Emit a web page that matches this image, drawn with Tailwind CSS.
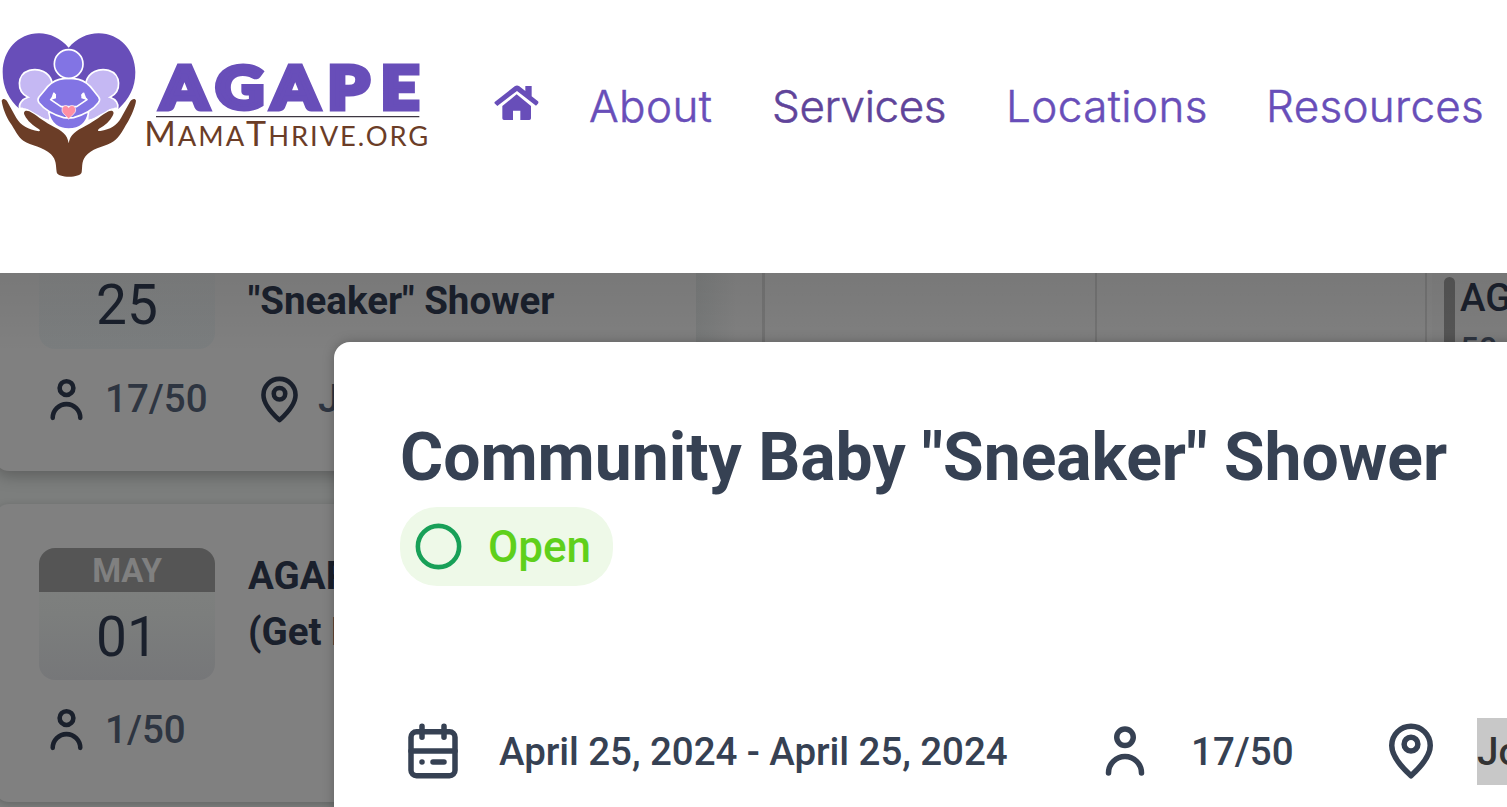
<!DOCTYPE html>
<html lang="en">
<head>
<meta charset="utf-8">
<title>AGAPE MamaThrive.org</title>
<script src="https://cdn.jsdelivr.net/npm/@tailwindcss/browser@4"></script>
</head>
<body class="bg-white">
<svg class="hidden">
  <symbol id="person" viewBox="0 0 24 24" fill="none" stroke="currentColor" stroke-width="2" stroke-linecap="round"><circle cx="12" cy="7" r="3"/><path d="M6 20a6 6 0 0 1 12 0"/></symbol>
  <symbol id="pin" viewBox="0 0 24 24" fill="none" stroke="currentColor" stroke-width="2" stroke-linejoin="round"><path d="M12 21C10.500 19.600 5 14.800 5 10a7 7 0 0 1 14 0c0 4.800-5.500 9.600-7 11Z"/><circle cx="12" cy="9.500" r="2.500"/></symbol>
  <symbol id="calendar" viewBox="0 0 24 24" fill="none" stroke="currentColor" stroke-width="2" stroke-linecap="round"><rect x="4" y="5" width="16" height="16" rx="2"/><path d="M8 3v4M16 3v4M4 12h16M8 16h0M12 16h4"/></symbol>
</svg>
<div class="relative flex h-[807px] w-[1507px] flex-col overflow-hidden font-['Roboto',sans-serif]">
  <header class="flex h-[273px] shrink-0 items-start bg-white">
    <svg class="mt-5 h-[170px] w-[430px] shrink-0" viewBox="0 0 1290 510">
      <path fill="#684eb9" d="M206 83C182 55 150 40 117 40C54 40 8 92 8 156C8 203 27 240 60 268L354 268C388 236 406 203 406 156C406 92 359 40 296 40C262 40 230 55 206 83Z"/>
      <g fill="#c5b8f3" stroke="#fff" stroke-width="5">
        <path d="M84 232C48 215 50 162 88 151C119 143 147 158 155 183L165 235L148 300C135 302 119 292 100 281C88 270 73 262 59 266C55 252 66 238 84 232Z"/>
        <path d="M330 232C366 215 364 162 326 151C295 143 267 158 259 183L249 235L266 300C280 302 295 292 314 281C325 269 340 262 353 266C357 252 348 238 330 232Z"/>
      </g>
      <path fill="#fff" d="M60 266C79 261 104 279 150 305C177 319 191 326 206 329C225 326 240 317 263 304C309 280 333 261 353 267L365 278L345 334L240 375H170L70 334L49 280Z"/>
      <g fill="#8274e4" stroke="#fff" stroke-width="5" stroke-linejoin="round">
        <path d="M146 277C151 312 177 327 206 327C236 327 260 312 266 277Z"/>
        <path d="M178 178Q206 172 236 178C257 183 271 198 280 211L296 231Q302 239 295 248C277 272 244 286 221 293Q206 294 191 293C168 286 136 272 117 248Q111 239 117 231L134 211C143 198 157 183 178 178Z"/>
        <circle cx="206" cy="132" r="43"/>
      </g>
      <path fill="#c5b8f3" d="M68 264C70 248 82 236 100 232C112 254 128 270 144 278L147 299C118 288 95 266 68 264ZM344 264C342 248 330 236 312 232C300 254 284 270 268 278L265 299C294 288 317 266 344 264Z"/>
      <path fill="none" stroke="#fff" stroke-width="5" stroke-linejoin="round" d="M161 219L166 225L152 239L183 260H230L261 239L246 225L251 219"/>
      <path fill="#fff" d="M160 217L168 225V235L152 240ZM252 217L244 225V235L261 240Z"/>
      <path fill="#ff8fa4" stroke="#fff" stroke-width="2" d="M206 298C201 288 186 282 186 270C186 255 202 253 206 263C211 253 227 255 227 270C227 282 211 288 206 298Z"/>
      <path fill="#6b3d27" d="M5 242C8 234 17 236 22 245L49 294C62 316 85 329 116 334C121 333 121 330 116 327C97 315 83 304 74 286C68 274 77 269 88 274C109 285 127 302 153 316C188 334 202 344 206 370C211 344 226 334 260 316C287 302 305 285 326 274C337 269 345 276 338 287C330 303 316 315 297 326C292 330 293 334 301 333C331 328 350 317 363 294L390 245C396 236 406 234 408 242C406 260 394 288 382 308C369 329 360 350 341 364C319 379 285 382 263 402C243 420 248 438 245 457C242 475 171 475 170 456C167 437 170 420 153 403C130 380 93 377 70 362C52 349 44 327 31 309C18 289 8 263 5 242Z"/>
      <text transform="scale(1.12 1)" font-family="Lato" font-weight="900" font-size="179" fill="#684eb9" stroke="#684eb9" stroke-width="15" y="268" x="431 577 728 877 1020">AGAPE</text>
      <path stroke="#3d3742" stroke-width="4" d="M468 290H1258"/>
      <text font-family="Lato" fill="#6b3d27" y="378" textLength="852" lengthAdjust="spacing" x="433"><tspan font-size="102">M</tspan><tspan font-size="82">AMA</tspan><tspan font-size="102">T</tspan><tspan font-size="82">HRIVE.ORG</tspan></text>
    </svg>
    <nav class="mt-[73px] flex h-[66px] items-center font-['Inter',sans-serif] text-[44px] font-light whitespace-nowrap text-[#684eb9] [-webkit-text-stroke:0.5px]">
      <svg class="mb-[7px] ml-[64px] h-[36px] w-[46px]" viewBox="0 0 138 108" fill="currentColor"><path d="M2 51L62 4Q69 -1 76 4L94 18V3H113V34L132 49Q135 53 131 57L126 62L69 18L10 63L3 56Q0 54 2 51Z"/><path d="M68 28L111 63V100Q111 105 106 105H79V77H57V105H30Q25 105 25 100V63Z"/></svg>
      <a class="ml-[49px] w-[183px] tracking-[0.4px]">About</a>
      <a class="w-[234px] tracking-[-0.4px] text-[#60449a]">Services</a>
      <a class="w-[260px] tracking-[0.4px]">Locations</a>
      <a class="tracking-[0.3px]">Resources</a>
    </nav>
  </header>
  <main class="relative flex h-[534px] overflow-hidden bg-[#808080] text-[#1a202c]">
    <section class="-mt-[100px] -ml-[5px] flex w-[701px] shrink-0 flex-col gap-[33px] bg-[#7c7e7d]">
      <article class="h-[298px] shrink-0 rounded-[14px] bg-[#808080] p-11 shadow-[0_5px_16px_rgba(0,0,0,0.25)]">
        <div class="flex gap-[33px]">
          <div class="h-[132px] w-[176px] overflow-hidden rounded-2xl bg-linear-to-b from-[#808080] to-[#7a7d7e] text-center">
            <div class="h-11 bg-[#555]"></div>
            <div class="text-[55px] leading-[88px]">25</div>
          </div>
          <h2 class="pt-[56px] text-[38.5px] leading-[56px] font-bold whitespace-nowrap">"Sneaker" Shower</h2>
        </div>
        <div class="mt-[23px] flex h-[55px] items-center text-[38.5px] font-medium text-[#2e3541]">
          <svg class="mr-[11px] size-[55px] text-[#1a202c]"><use href="#person"/></svg><span class="w-[147px] pb-[2px]">17/50</span>
          <svg class="mr-[11px] size-[55px] text-[#1a202c]"><use href="#pin"/></svg><span class="pb-[2px]">Jordan</span>
        </div>
      </article>
      <article class="h-[298px] shrink-0 rounded-[14px] bg-[#808080] p-11 shadow-[0_2px_8px_rgba(0,0,0,0.2)]">
        <div class="flex gap-[33px]">
          <div class="h-[132px] w-[176px] overflow-hidden rounded-2xl bg-linear-to-b from-[#808280] via-[#7c7e7d] to-[#767779] text-center">
            <div class="h-11 bg-[#555] text-[33px] leading-[46px] font-bold text-[#808080]">MAY</div>
            <div class="text-[55px] leading-[90px]">01</div>
          </div>
          <h2 class="text-[38.5px] leading-[56px] font-bold whitespace-nowrap">AGAPE Group<br>(Get Help)</h2>
        </div>
        <div class="mt-[22px] flex h-[55px] items-center text-[38.5px] font-medium text-[#2e3541]">
          <svg class="mr-[11px] size-[55px] text-[#1a202c]"><use href="#person"/></svg><span>1/50</span>
        </div>
      </article>
    </section>
    <section class="flex grow bg-linear-to-r from-[#777979] via-[#808080] via-5% to-[#808080]">
      <div class="w-[69px] border-r-3 border-[#727272]"></div>
      <div class="w-[332px] border-r-2 border-[#727272]"></div>
      <div class="w-[330px] border-r-2 border-[#727272]"></div>
      <div class="ml-[5px] flex grow bg-[#7e7e7e] pt-1 pl-3">
        <div class="h-60 w-[11px] rounded-full bg-[#555]"></div>
        <div class="ml-[5px] w-[47px] overflow-hidden text-[38.5px] leading-[42px] font-medium whitespace-nowrap">AGAPE<div class="mt-[10px] text-[33px] text-[#2e3541]">50</div></div>
      </div>
    </section>
    <div class="absolute inset-x-0 top-0 h-20 bg-linear-to-b from-black/6 to-transparent"></div>
  </main>
  <div class="absolute top-[342px] left-[334px] h-[600px] w-[1300px] rounded-tl-[16px] bg-white px-[66px] pt-[72px] text-[#364153] shadow-[0_0_12px_rgba(0,0,0,0.25)]">
    <h1 class="text-[66px] leading-[88px] font-bold whitespace-nowrap">Community Baby "Sneaker" Shower</h1>
    <div class="mt-[5px] flex h-[79px] w-[213px] items-center gap-[22px] rounded-[37px] bg-[#eef9e8] pl-[11px] text-[44px] font-medium text-[#5fd01b]">
      <svg class="size-[55px]" viewBox="0 0 24 24" fill="none" stroke="#18a058" stroke-width="2"><circle cx="12" cy="12" r="9"/></svg>Open
    </div>
    <div class="mt-[132px] flex h-[66px] items-center text-[38.5px] font-medium whitespace-nowrap">
      <svg class="mr-[33px] size-[66px] shrink-0"><use href="#calendar"/></svg><span class="w-[593px] shrink-0 pt-[2px] tracking-[-0.06px]">April 25, 2024 - April 25, 2024</span>
      <svg class="mr-[33px] size-[66px] shrink-0"><use href="#person"/></svg><span class="w-[187px] shrink-0 pt-[2px]">17/50</span>
      <svg class="mr-[33px] size-[66px] shrink-0"><use href="#pin"/></svg><span class="h-[67px] bg-[#c8c8c8] leading-[67px] text-[#333]">Jordan</span>
    </div>
  </div>
</div>
</body>
</html>
